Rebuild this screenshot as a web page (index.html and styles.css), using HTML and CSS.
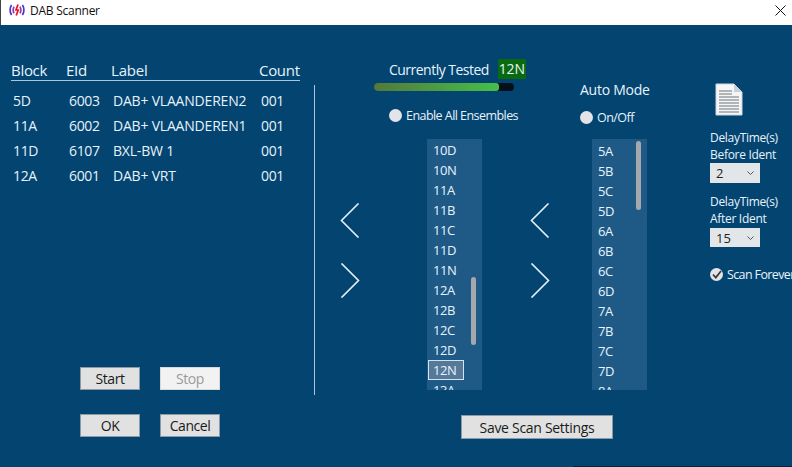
FILE: index.html
```html
<!DOCTYPE html>
<html lang="en">
<head>
<meta charset="utf-8">
<title>DAB Scanner</title>
<link rel="stylesheet" href="styles.css">
</head>
<body>
<div class="window">
  <header class="titlebar">
    <svg class="app-icon" width="16" height="12" viewBox="0 0 16 12" fill="none">
      <path d="M2.6 1C.6 3.8 .6 8.2 2.6 11M13.4 1C15.4 3.8 15.4 8.2 13.4 11" stroke="#4a36c8" stroke-width="1.7"/>
      <path d="M5 2.6C3.9 4.6 3.9 7.4 5 9.4M11 2.6C12.1 4.6 12.1 7.4 11 9.4" stroke="#9a35b0" stroke-width="1.6"/>
      <path d="M9 .5L7 6H9.2L7.2 11.5" stroke="#e8141e" stroke-width="1.7"/>
    </svg>
    <span class="app-title">DAB Scanner</span>
    <svg class="close" width="11" height="11" viewBox="0 0 11 11" fill="none"><path d="M.5 .5L10.5 10.5M10.5 .5L.5 10.5" stroke="#111" stroke-width="1"/></svg>
  </header>
  <main class="content">
    <section class="left">
      <div class="results">
        <div class="row head"><span>Block</span><span>EId</span><span>Label</span><span>Count</span></div>
        <div class="rows">
          <div class="row"><span>5D</span><span>6003</span><span>DAB+ VLAANDEREN2</span><span>001</span></div>
          <div class="row"><span>11A</span><span>6002</span><span>DAB+ VLAANDEREN1</span><span>001</span></div>
          <div class="row"><span>11D</span><span>6107</span><span>BXL-BW 1</span><span>001</span></div>
          <div class="row"><span>12A</span><span>6001</span><span>DAB+ VRT</span><span>001</span></div>
        </div>
      </div>
      <div class="actions">
        <div class="btn-row"><button class="btn">Start</button><button class="btn off">Stop</button></div>
        <div class="btn-row"><button class="btn">OK</button><button class="btn">Cancel</button></div>
      </div>
    </section>
    <div class="divider"></div>
    <section class="center">
      <div class="center-top">
        <div class="tested-block">
          <div class="tested"><span>Currently Tested</span><span class="now">12N</span></div>
          <div class="progress"><div class="fill"></div></div>
          <label class="radio enable"><i class="dot"></i>Enable All Ensembles</label>
        </div>
        <div class="auto-block">
          <div class="auto-title">Auto Mode</div>
          <label class="radio onoff"><i class="dot"></i>On/Off</label>
        </div>
      </div>
      <div class="lists">
        <div class="arrows first">
          <svg width="20" height="35" viewBox="0 0 20 35" fill="none"><path d="M18.5 .5L1.5 17.5L18.5 34.5" stroke="#e8f2fa" stroke-width="1.6"/></svg>
          <svg width="20" height="35" viewBox="0 0 20 35" fill="none"><path d="M1.5 .5L18.5 17.5L1.5 34.5" stroke="#e8f2fa" stroke-width="1.6"/></svg>
        </div>
        <div class="list">
          <div class="item">10D</div><div class="item">10N</div><div class="item">11A</div><div class="item">11B</div><div class="item">11C</div><div class="item">11D</div><div class="item">11N</div><div class="item">12A</div><div class="item">12B</div><div class="item">12C</div><div class="item">12D</div><div class="item sel">12N</div><div class="item">13A</div>
          <div class="thumb low"></div>
        </div>
        <div class="arrows second">
          <svg width="20" height="35" viewBox="0 0 20 35" fill="none"><path d="M18.5 .5L1.5 17.5L18.5 34.5" stroke="#e8f2fa" stroke-width="1.6"/></svg>
          <svg width="20" height="35" viewBox="0 0 20 35" fill="none"><path d="M1.5 .5L18.5 17.5L1.5 34.5" stroke="#e8f2fa" stroke-width="1.6"/></svg>
        </div>
        <div class="list second-list">
          <div class="item">5A</div><div class="item">5B</div><div class="item">5C</div><div class="item">5D</div><div class="item">6A</div><div class="item">6B</div><div class="item">6C</div><div class="item">6D</div><div class="item">7A</div><div class="item">7B</div><div class="item">7C</div><div class="item">7D</div><div class="item">8A</div>
          <div class="thumb high"></div>
        </div>
      </div>
      <button class="btn save">Save Scan Settings</button>
    </section>
    <aside class="right">
      <svg class="doc" width="28" height="33" viewBox="0 0 28 33" fill="none">
        <path d="M1 1H19L27 9V32H1Z" fill="#f4f6f8" stroke="#cfd6dc"/>
        <path d="M19 1V9H27Z" fill="#c9d0d6"/>
        <path d="M4 8H17M4 11H17M4 14H24M4 17H24M4 20H24M4 23H24M4 26H24M4 29H24" stroke="#6f7478" stroke-width="1"/>
      </svg>
      <div class="delay first-delay">DelayTime(s)<br>Before Ident</div>
      <div class="select"><span>2</span><svg width="7" height="4" viewBox="0 0 7 4" fill="none"><path d="M.5 .5L3.5 3.5L6.5 .5" stroke="#555"/></svg></div>
      <div class="delay">DelayTime(s)<br>After Ident</div>
      <div class="select"><span>15</span><svg width="7" height="4" viewBox="0 0 7 4" fill="none"><path d="M.5 .5L3.5 3.5L6.5 .5" stroke="#555"/></svg></div>
      <label class="radio forever"><i class="dot checked"><svg width="10" height="9" viewBox="0 0 10 9" fill="none"><path d="M1 4.5L3.8 7.5L9 1" stroke="#3a3a3a" stroke-width="1.8"/></svg></i>Scan Forever</label>
    </aside>
  </main>
</div>
</body>
</html>
```
FILE: styles.css
```css
* { box-sizing: border-box; }
html, body { margin: 0; height: 100%; overflow: hidden; }
body { font-family: "Open Sans", "Noto Sans", sans-serif; font-size: 13px; color: #e6f3fb; }
.window { position: relative; width: 792px; height: 467px; display: flex; flex-direction: column; background: #044471; }
.window::after { content: ""; position: absolute; left: 573px; right: 0; bottom: 0; height: 1px; background: #0b2238; }

.titlebar { height: 25px; background: #fff; display: flex; align-items: center; padding: 0 6px 5px 8px; border-left: 1px solid #444; color: #111; flex: none; }
.app-icon { flex: none; }
.app-title { font-size: 12px; margin-left: 5px; letter-spacing: -.25px; }
.close { margin-left: auto; }

.content { flex: 1; display: flex; min-height: 0; }

.left { width: 314px; flex: none; display: flex; flex-direction: column; padding: 35px 0 0 11px; }
.results { width: 289px; }
.row { display: grid; grid-template-columns: 56px 44px 148px 1fr; font-size: 14px; letter-spacing: -.35px; height: 25px; align-items: center; padding-left: 2px; }
.row span:nth-child(3) { letter-spacing: -.2px; }
.head { grid-template-columns: 55px 45px 148px 1fr; font-size: 15px; letter-spacing: -.3px; height: 21px; padding-left: 0; border-bottom: 1px solid #a9c6dc; align-items: start; line-height: 21px; }
.rows { padding-top: 7px; }
.actions { margin-top: auto; padding: 0 0 30px 69px; display: flex; flex-direction: column; gap: 24px; }
.btn-row { display: flex; gap: 20px; }
.btn { width: 60px; height: 23px; padding: 0; border: 1px solid #8c9aa6; background: #e1e1e1; color: #1a1a1a; font: 14px "Open Sans", sans-serif; letter-spacing: -.45px; }
.btn.off { background: #f2f2f2; color: #9a9a9a; border-color: #d8d8d8; }

.divider { width: 1px; height: 310px; margin-top: 60px; background: #a9c6dc; flex: none; }

.center { width: 375px; flex: none; display: flex; flex-direction: column; }
.center-top { display: flex; height: 114px; }
.tested-block { width: 265px; padding: 33px 0 0 59px; }
.tested { display: flex; align-items: center; gap: 9px; font-size: 14px; letter-spacing: -.52px; margin-left: 15px; height: 22px; }
.now { background: #0a6a10; padding: 0 1px; line-height: 20px; letter-spacing: -.2px; }
.progress { width: 140px; height: 8px; border-radius: 4px; background: #06101a; margin-top: 3px; overflow: hidden; }
.fill { width: 125px; height: 100%; border-radius: 0 3px 3px 0; background: linear-gradient(90deg, #53793c, #45bf49); }
.radio { display: flex; align-items: center; font-size: 12.5px; letter-spacing: -.55px; }
.dot { width: 13px; height: 13px; border-radius: 50%; background: #e2e4e8; margin-right: 4px; display: flex; align-items: center; justify-content: center; flex: none; }
.enable { margin: 16px 0 0 15px; }
.auto-block { padding-top: 55px; }
.auto-title { font-size: 14px; letter-spacing: -.25px; height: 22px; }
.onoff { margin-top: 7px; }

.lists { display: flex; align-items: stretch; height: 251px; }
.arrows { display: flex; flex-direction: column; gap: 25px; padding-top: 64px; flex: none; }
.first { margin: 0 67px 0 25px; }
.second { margin: 0 42px 0 48px; }
.list { position: relative; width: 55px; height: 251px; flex: none; background: #1f5a87; overflow: hidden; padding: 1px 0 0 6px; }
.item { height: 20px; line-height: 20px; font-size: 13px; letter-spacing: -.4px; width: 36px; }
.item.sel { border: 1px solid #cfe3f2; background: #56799a; margin-left: -5px; padding-left: 4px; height: 20px; line-height: 18px; }
.second-list { padding-top: 2px; }
.thumb { position: absolute; right: 6px; width: 5px; border-radius: 3px; background: #a5a8ad; }
.thumb.low { top: 138px; height: 68px; }
.thumb.high { top: 2px; height: 69px; }
.save { width: 152px; height: 24px; margin: 25px 0 0 146px; font-size: 14px; letter-spacing: -.3px; }

.right { flex: 1; padding: 58px 0 0 20px; min-width: 0; white-space: nowrap; }
.doc { display: block; margin-left: 5px; }
.delay { font-size: 12px; line-height: 17px; letter-spacing: -.3px; margin-top: 10px; }
.first-delay { margin-top: 13px; }
.delay + .select { margin-top: 0; }
.select { width: 50px; height: 20px; background: #e3e6e8; color: #222; display: flex; align-items: center; justify-content: space-between; padding: 0 6px; font-size: 13px; }
.select + .delay + .select { margin-top: 1px; height: 19px; }
.forever { margin-top: 19px; letter-spacing: -.62px; }
```
